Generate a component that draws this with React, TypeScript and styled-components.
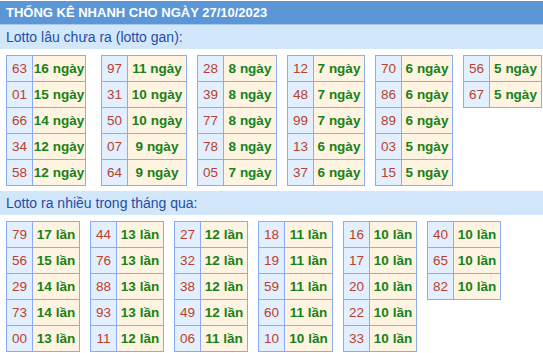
import { createGlobalStyle } from 'styled-components';
import styled from 'styled-components';

const GlobalStyle = createGlobalStyle`
  html, body {
    margin: 0;
    padding: 0;
    background: #fff;
    overflow: hidden;
  }
  body {
    font-family: 'Liberation Sans', Arial, sans-serif;
  }
`;

const Page = styled.div`
  width: 543px;
  display: flex;
  flex-direction: column;
`;

const Header = styled.div`
  height: 23px;
  margin-top: 1px;
  border-bottom: 1px solid #aac8ec;
  background: #5b97d6;
  color: #fff;
  font-weight: bold;
  font-size: 13px;
  line-height: 23px;
  padding-left: 6px;
`;

const SectionTitle = styled.div`
  height: 24px;
  background: #d3e7fb;
  color: #1e4ea6;
  font-size: 14px;
  line-height: 24px;
  padding-left: 6px;
`;

const Tables = styled.div`
  display: flex;
  align-items: flex-start;
  gap: 10px;
  padding: 6px 0 5px 6px;
`;

const Table = styled.table<{ $w: number; $extra?: number }>`
  width: ${(p) => p.$w}px;
  margin-right: ${(p) => p.$extra ?? 0}px;
  border-collapse: collapse;
  table-layout: fixed;
  flex: none;
`;

const Num = styled.td`
  width: 25px;
  height: 25px;
  padding: 0;
  border: 1px solid #8cabf0;
  background: #e2efff;
  color: #bb4129;
  font-size: 13.5px;
  text-align: center;
`;

const Count = styled.td`
  height: 25px;
  padding: 0;
  border: 1px solid #8cabf0;
  background: #fff3e2;
  color: #15821a;
  font-size: 13.5px;
  font-weight: bold;
  text-align: center;
  white-space: nowrap;
`;

type Col = { w: number; extra?: number; rows: [string, string][] };

const gan: Col[] = [
  { w: 80, extra: 5, rows: [['63', '16'], ['01', '15'], ['66', '14'], ['34', '12'], ['58', '12']] },
  { w: 86, rows: [['97', '11'], ['31', '10'], ['50', '10'], ['07', '9'], ['64', '9']] },
  { w: 80, rows: [['28', '8'], ['39', '8'], ['77', '8'], ['78', '8'], ['05', '7']] },
  { w: 78, rows: [['12', '7'], ['48', '7'], ['99', '7'], ['13', '6'], ['37', '6']] },
  { w: 78, rows: [['70', '6'], ['86', '6'], ['89', '6'], ['03', '5'], ['15', '5']] },
  { w: 79, rows: [['56', '5'], ['67', '5']] },
];

const nhieu: Col[] = [
  { w: 74, rows: [['79', '17'], ['56', '15'], ['29', '14'], ['73', '14'], ['00', '13']] },
  { w: 74, rows: [['44', '13'], ['76', '13'], ['88', '13'], ['93', '13'], ['11', '12']] },
  { w: 74, rows: [['27', '12'], ['32', '12'], ['38', '12'], ['49', '12'], ['06', '11']] },
  { w: 75, rows: [['18', '11'], ['19', '11'], ['59', '11'], ['60', '11'], ['10', '10']] },
  { w: 74, rows: [['16', '10'], ['17', '10'], ['20', '10'], ['22', '10'], ['33', '10']] },
  { w: 74, rows: [['40', '10'], ['65', '10'], ['82', '10']] },
];

function Block({ cols, unit }: { cols: Col[]; unit: string }) {
  return (
    <Tables>
      {cols.map((c, i) => (
        <Table key={i} $w={c.w} $extra={c.extra}>
          <tbody>
            {c.rows.map(([n, k]) => (
              <tr key={n}>
                <Num>{n}</Num>
                <Count>
                  {k} {unit}
                </Count>
              </tr>
            ))}
          </tbody>
        </Table>
      ))}
    </Tables>
  );
}

export default function App() {
  return (
    <Page>
      <GlobalStyle />
      <Header>THỐNG KÊ NHANH CHO NGÀY 27/10/2023</Header>
      <SectionTitle>Lotto lâu chưa ra (lotto gan):</SectionTitle>
      <Block cols={gan} unit="ngày" />
      <SectionTitle>Lotto ra nhiều trong tháng qua:</SectionTitle>
      <Block cols={nhieu} unit="lần" />
    </Page>
  );
}
